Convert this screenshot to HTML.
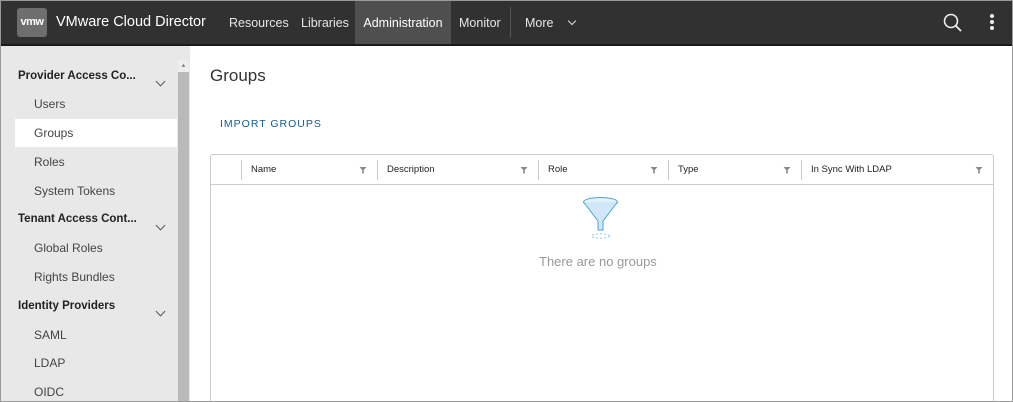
<!DOCTYPE html>
<html><head><style>
*{box-sizing:border-box;margin:0;padding:0}
html,body{width:1013px;height:402px;overflow:hidden}
body{font-family:"Liberation Sans",sans-serif;background:#fff;position:relative}
.frame{position:absolute;left:0;top:0;width:1013px;height:402px;border:1px solid #9a9a9a;z-index:10;pointer-events:none}
.hdr{position:absolute;left:0;top:0;width:1013px;height:46px;background:#313131;border-bottom:2px solid #1a1a1a}
.logo{position:absolute;left:17px;top:8px;width:30px;height:29px;background:#6e6e6e;border-radius:3px;color:#fff;font-size:11px;font-weight:bold;text-align:center;line-height:29px;letter-spacing:-0.5px}
.title{position:absolute;left:56px;top:14px;color:#fff;font-size:14.5px}
.nav{position:absolute;top:0;height:44px;line-height:46px;color:#e6e6e6;font-size:12.5px}
.side{position:absolute;left:0;top:46px;width:190px;height:356px;background:#e8e8e8}
.sb{position:absolute;left:178px;top:60px;width:11px;height:342px;background:#b9b9b9}
.sbt{position:absolute;left:178px;top:60px;width:11px;height:12px;background:#eee;font-size:6px;color:#888;text-align:center;line-height:12px}
.sh{position:absolute;left:18px;font-size:11.5px;font-weight:bold;color:#222}
.si{position:absolute;left:34px;font-size:12px;color:#444}
.chev{position:absolute;left:157px;width:7px;height:7px;border-right:1.3px solid #555;border-bottom:1.3px solid #555;transform:rotate(45deg)}
.sel{position:absolute;left:15px;top:119px;width:162px;height:28px;background:#fff}
.grid{position:absolute;left:210px;top:154px;width:784px;height:250px;border:1px solid #ccc;border-radius:3px}
.gh{position:absolute;left:0;top:0;width:782px;height:30px;border-bottom:1px solid #ccc;font-size:9.5px;color:#222}
.col{position:absolute;top:0;height:30px;line-height:30px}
.sep{position:absolute;top:5px;width:1px;height:20px;background:#ccc}
.f{position:absolute;top:11px}
</style></head><body>
<div class="frame"></div>
<div class="hdr">
<div class="logo">vmw</div>
<div class="title">VMware Cloud Director</div>
<div class="nav" style="left:229px">Resources</div>
<div class="nav" style="left:301px">Libraries</div>
<div class="nav" style="left:355px;width:96px;background:#4f4f4f;color:#fff;text-align:center">Administration</div>
<div class="nav" style="left:459px">Monitor</div>
<div style="position:absolute;left:510px;top:7px;width:1px;height:31px;background:#555"></div>
<div class="nav" style="left:525px">More</div>
<div style="position:absolute;left:569px;top:18px;width:6px;height:6px;border-right:1.3px solid #ddd;border-bottom:1.3px solid #ddd;transform:rotate(45deg)"></div>
<svg style="position:absolute;left:942px;top:12px" width="22" height="22"><circle cx="9" cy="9" r="6.5" fill="none" stroke="#eee" stroke-width="1.6"/><line x1="13.5" y1="13.5" x2="19" y2="19" stroke="#eee" stroke-width="1.8"/></svg>
<svg style="position:absolute;left:988px;top:13px" width="8" height="18"><circle cx="4" cy="3" r="2" fill="#eee"/><circle cx="4" cy="9" r="2" fill="#eee"/><circle cx="4" cy="15" r="2" fill="#eee"/></svg>
</div>
<div class="side"></div>
<div class="sel"></div>
<div class="sb"></div><div class="sbt">▲</div>
<div class="sh" style="top:70px">Provider Access Co...</div><div class="chev" style="top:78px"></div>
<div class="si" style="top:97px">Users</div>
<div class="si" style="top:126px">Groups</div>
<div class="si" style="top:155px">Roles</div>
<div class="si" style="top:184px">System Tokens</div>
<div class="sh" style="top:213px">Tenant Access Cont...</div><div class="chev" style="top:222px"></div>
<div class="si" style="top:241px">Global Roles</div>
<div class="si" style="top:270px">Rights Bundles</div>
<div class="sh" style="top:300px">Identity Providers</div><div class="chev" style="top:308px"></div>
<div class="si" style="top:328px">SAML</div>
<div class="si" style="top:356px">LDAP</div>
<div class="si" style="top:385px">OIDC</div>
<div style="position:absolute;left:210px;top:66px;font-size:17px;color:#333">Groups</div>
<div style="position:absolute;left:220px;top:118px;font-size:10.5px;color:#0f5d94;letter-spacing:1px">IMPORT GROUPS</div>
<div class="grid">
<div class="gh">
<div class="sep" style="left:30px"></div>
<div class="col" style="left:40px">Name</div><svg class="f" style="left:148px" width="8" height="8"><path d="M0.5 1H7.5L4.8 4V7.5H3.2V4Z" fill="#888"/></svg>
<div class="sep" style="left:166px"></div>
<div class="col" style="left:176px">Description</div><svg class="f" style="left:309px" width="8" height="8"><path d="M0.5 1H7.5L4.8 4V7.5H3.2V4Z" fill="#888"/></svg>
<div class="sep" style="left:327px"></div>
<div class="col" style="left:337px">Role</div><svg class="f" style="left:439px" width="8" height="8"><path d="M0.5 1H7.5L4.8 4V7.5H3.2V4Z" fill="#888"/></svg>
<div class="sep" style="left:457px"></div>
<div class="col" style="left:467px">Type</div><svg class="f" style="left:572px" width="8" height="8"><path d="M0.5 1H7.5L4.8 4V7.5H3.2V4Z" fill="#888"/></svg>
<div class="sep" style="left:590px"></div>
<div class="col" style="left:600px">In Sync With LDAP</div><svg class="f" style="left:764px" width="8" height="8"><path d="M0.5 1H7.5L4.8 4V7.5H3.2V4Z" fill="#888"/></svg>
</div>
</div>
<svg style="position:absolute;left:582px;top:196px" width="40" height="46"><ellipse cx="18.5" cy="6" rx="17" ry="4.5" fill="#e4f1fa" stroke="#49a3d8" stroke-width="1"/><path d="M1.5 6 L16 25 L16 34 L21 34 L21 25 L35.5 6" fill="#cfe7f6" stroke="#49a3d8" stroke-width="1"/><ellipse cx="18.5" cy="40" rx="9" ry="2.2" fill="none" stroke="#8cc8ec" stroke-dasharray="2 2"/></svg>
<div style="position:absolute;left:539px;top:254px;font-size:13px;color:#999">There are no groups</div>
</body></html>
